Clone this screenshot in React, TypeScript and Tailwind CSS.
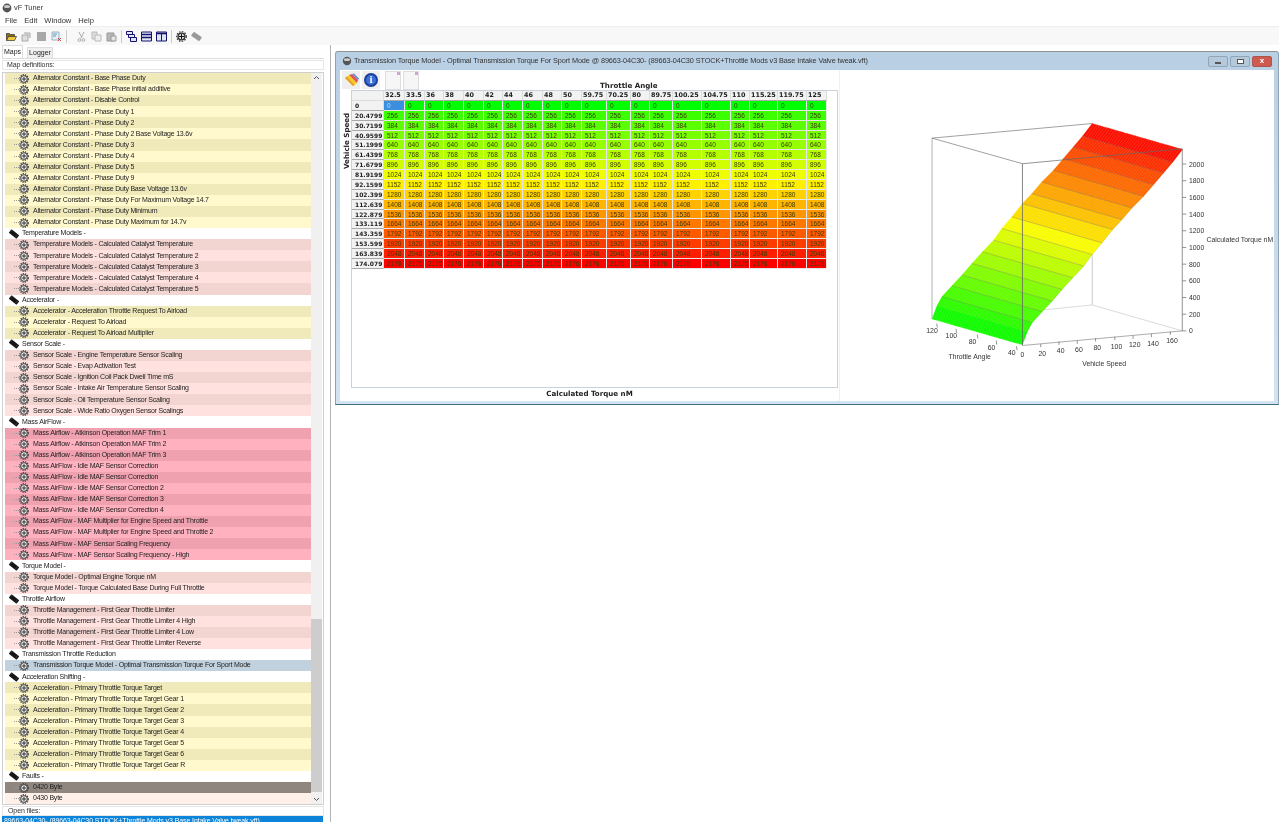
import type { ReactNode } from 'react'

const UI = "font-['Liberation_Sans',Arial,sans-serif]"

type Row = { label: string; kind: 'head' | 'yellow' | 'pink' | 'red' | 'sel' | 'dark' | 'peach' }

const group = (kind: Row['kind'], prefix: string, names: string[]): Row[] =>
  names.map((n) => ({ label: prefix + n, kind }))
const head = (label: string): Row => ({ label, kind: 'head' })

const ROWS: Row[] = [
  ...group('yellow', 'Alternator Constant - ', [
    'Base Phase Duty',
    'Base Phase initial additive',
    'Disable Control',
    'Phase Duty 1',
    'Phase Duty 2',
    'Phase Duty 2 Base Voltage 13.6v',
    'Phase Duty 3',
    'Phase Duty 4',
    'Phase Duty 5',
    'Phase Duty 9',
    'Phase Duty Base Voltage 13.6v',
    'Phase Duty For Maximum Voltage 14.7',
    'Phase Duty Minimum',
    'Phase Duty Maximum for 14.7v',
  ]),
  head('Temperature Models -'),
  ...group('pink', 'Temperature Models - Calculated Catalyst Temperature', ['', ' 2', ' 3', ' 4', ' 5']),
  head('Accelerator -'),
  ...group('yellow', 'Accelerator - ', ['Acceleration Throttle Request To Airload', 'Request To Airload', 'Request To Airload Multiplier']),
  head('Sensor Scale -'),
  ...group('pink', 'Sensor Scale - ', [
    'Engine Temperature Sensor Scaling',
    'Evap Activation Test',
    'Ignition Coil Pack Dwell Time mS',
    'Intake Air Temperature Sensor Scaling',
    'Oil Temperature Sensor Scaling',
    'Wide Ratio Oxygen Sensor Scalings',
  ]),
  head('Mass AirFlow -'),
  ...group('red', 'Mass Airflow - ', ['Atkinson Operation MAF Trim 1', 'Atkinson Operation MAF Trim 2', 'Atkinson Operation MAF Trim 3']),
  ...group('red', 'Mass AirFlow - ', [
    'Idle MAF Sensor Correction',
    'Idle MAF Sensor Correction',
    'Idle MAF Sensor Correction 2',
    'Idle MAF Sensor Correction 3',
    'Idle MAF Sensor Correction 4',
    'MAF Multiplier for Engine Speed and Throttle',
    'MAF Multiplier for Engine Speed and Throttle 2',
    'MAF Sensor Scaling Frequency',
    'MAF Sensor Scaling Frequency - High',
  ]),
  head('Torque Model -'),
  ...group('pink', 'Torque Model - ', ['Optimal Engine Torque nM', 'Torque Calculated Base During Full Throttle']),
  head('Throttle Airflow'),
  ...group('pink', 'Throttle Management - First Gear Throttle Limiter', ['', ' 4 High', ' 4 Low', ' Reverse']),
  head('Transmission Throttle Reduction'),
  { label: 'Transmission Torque Model - Optimal Transmission Torque For Sport Mode', kind: 'sel' },
  head('Acceleration Shifting -'),
  ...group('yellow', 'Acceleration - Primary Throttle Torque Target', ['', ' Gear 1', ' Gear 2', ' Gear 3', ' Gear 4', ' Gear 5', ' Gear 6', ' Gear R']),
  head('Faults -'),
  { label: '0420 Byte', kind: 'dark' },
  { label: '0430 Byte', kind: 'peach' },
]

const ROW_BG: Record<Row['kind'], [string, string]> = {
  head: ['bg-white', 'bg-white'],
  yellow: ['bg-[#f0eabb]', 'bg-[#fff9cd]'],
  pink: ['bg-[#f2d4d1]', 'bg-[#ffe2df]'],
  red: ['bg-[#f0a1b0]', 'bg-[#ffb1c0]'],
  sel: ['bg-[#c1d1de]', 'bg-[#c1d1de]'],
  dark: ['bg-[#8f8680]', 'bg-[#8f8680]'],
  peach: ['bg-[#fff0e9]', 'bg-[#fff0e9]'],
}

function GearIcon() {
  return (
    <svg width="10" height="10" viewBox="0 0 10 10" className="shrink-0">
      <circle cx="5" cy="5" r="3.2" fill="#f0f0f0" stroke="#444" strokeWidth="1.1" />
      <circle cx="5" cy="5" r="4.3" fill="none" stroke="#444" strokeWidth="1.2" strokeDasharray="1.3 1" />
      <path d="M5 3v4M3 5h4" stroke="#222" strokeWidth="0.9" />
    </svg>
  )
}

function ChipIcon() {
  return (
    <svg width="10" height="10" viewBox="0 0 10 10" className="shrink-0">
      <rect x="0" y="2.800" width="10" height="4.400" rx="0.6" fill="#151515" transform="rotate(38 5 5)" />
      <path d="M3.500 1 1.800 3M8.500 5.500 6.500 8" stroke="#444" strokeWidth="0.8" />
    </svg>
  )
}

function TreeRow({ row, alt }: { row: Row; alt: boolean }) {
  if (row.kind === 'head') {
    return (
      <div className="flex h-[11.08px] items-center bg-white pl-[4px] text-[7px] tracking-[-0.22px] text-[#222]">
        <ChipIcon />
        <span className="ml-[3px] whitespace-nowrap">{row.label}</span>
      </div>
    )
  }
  return (
    <div className={`relative flex h-[11.08px] items-center pl-[14px] text-[7px] tracking-[-0.22px] text-[#222] ${ROW_BG[row.kind][alt ? 1 : 0]}`}>
      <div className="absolute left-[9px] top-[5px] w-[5px] border-t border-dotted border-[#999]" />
      <GearIcon />
      <span className="ml-[4px] whitespace-nowrap">{row.label}</span>
    </div>
  )
}

function Tree() {
  let alt = false
  return (
    <div className="flex-1 overflow-hidden">
      {ROWS.map((r, i) => {
        if (r.kind === 'head') {
          alt = false
        } else {
          alt = !alt
        }
        return <TreeRow key={i} row={r} alt={!alt} />
      })}
    </div>
  )
}

function Tb({ children }: { children: ReactNode }) {
  return (
    <svg width="11" height="11" viewBox="0 0 11 11" className="shrink-0">
      {children}
    </svg>
  )
}

function Toolbar() {
  const sep = <div className="h-[13px] w-px bg-[#ccc]" />
  return (
    <div className="flex h-[19px] items-center gap-[4px] border-t border-[#eee] bg-[#f8f8f8] pl-[6px]">
      <Tb>
        <path d="M0.500 9.500V2.500h3l1 1h4v2" fill="#8a6a10" stroke="#333" strokeWidth="0.7" />
        <path d="M0.500 9.500 2.500 5.500h8l-2 4z" fill="#f0c83c" stroke="#333" strokeWidth="0.7" />
      </Tb>
      <Tb>
        <path d="M1 4h6v6H1zM3 2h6v5" fill="#ddd" stroke="#aaa" />
      </Tb>
      <Tb>
        <rect x="1" y="1" width="9" height="9" fill="#a8a8a8" />
      </Tb>
      <Tb>
        <path d="M1 1h7v8H1z" fill="#e4eef4" stroke="#7a9aaa" strokeWidth="0.7" />
        <path d="M2 3h4M2 5h3" stroke="#38a" strokeWidth="0.8" />
        <path d="M7 7l3 3M10 7l-3 3" stroke="#c33" strokeWidth="0.9" />
      </Tb>
      {sep}
      <div className="w-[1px]" />
      <Tb>
        <path d="M3 1l3 6M8 1 5 7" stroke="#aaa" fill="none" />
        <circle cx="3.500" cy="9" r="1.400" fill="none" stroke="#aaa" />
        <circle cx="7.500" cy="9" r="1.400" fill="none" stroke="#aaa" />
      </Tb>
      <Tb>
        <path d="M1 1h5v7H1z" fill="#ddd" stroke="#bbb" />
        <path d="M4 4h6v6H4z" fill="#eee" stroke="#bbb" />
      </Tb>
      <Tb>
        <path d="M1 2h7v8H1z" fill="#b8b8b8" stroke="#999" />
        <path d="M5 5h5v5H5z" fill="#e4e4e4" stroke="#999" />
      </Tb>
      {sep}
      <Tb>
        <path d="M0.500 0.500h6v3h-6zM2.500 3.500h6v3h-6zM4.500 6.500h6v4h-6z" fill="#dfe4f5" stroke="#14146e" strokeWidth="1" />
      </Tb>
      <Tb>
        <path d="M0.500 1h10v9h-10z" fill="#dfe4f5" stroke="#14146e" strokeWidth="1" />
        <path d="M0.500 3.500h10M0.500 6.500h10" stroke="#14146e" strokeWidth="1.400" />
      </Tb>
      <Tb>
        <path d="M0.500 1h10v9h-10z" fill="#dfe4f5" stroke="#14146e" strokeWidth="1" />
        <path d="M0.500 2.500h10" stroke="#14146e" strokeWidth="1.600" />
        <path d="M5.500 2.500V10" stroke="#14146e" strokeWidth="1" />
      </Tb>
      {sep}
      <Tb>
        <circle cx="5.500" cy="5.500" r="3.400" fill="#ddd" stroke="#333" strokeWidth="1.400" />
        <circle cx="5.500" cy="5.500" r="4.800" fill="none" stroke="#333" strokeWidth="1.200" strokeDasharray="1.500 1.300" />
        <path d="M5.500 3v5M3 5.500h5" stroke="#111" />
      </Tb>
      <Tb>
        <rect x="0.500" y="3" width="10" height="5" rx="1" fill="#999" transform="rotate(35 5.500 5.500)" />
      </Tb>
    </div>
  )
}

function Sidebar() {
  return (
    <div className="flex w-[331px] shrink-0 flex-col border-r border-[#b4b4b4] pl-[2px] pr-[6px]">
      <div className="flex h-[13px] items-end text-[7px] text-[#222]">
        <div className="flex h-[13px] w-[21px] items-center justify-center border-x border-t border-[#ddd] bg-white">Maps</div>
        <div className="ml-[4px] flex h-[11px] w-[26px] items-center justify-center border-x border-t border-[#ddd] bg-[#f0f0f0]">Logger</div>
      </div>
      <div className="flex min-h-0 flex-1 flex-col border-t border-[#ddd]">
        <div className="mt-[1px] flex h-[10px] items-center border border-[#e6e6e6] pl-[4px] text-[7px] tracking-[-0.1px] text-[#333]">Map definitions:</div>
        <div className="mt-[2px] flex h-[735px] border border-[#cfcfcf] pl-[2px] pr-[1px]">
          <Tree />
          <div className="flex w-[11px] shrink-0 flex-col bg-[#f0f0f0] text-[#555]">
            <svg width="11" height="10" viewBox="0 0 11 10" className="shrink-0">
              <path d="M3 6l2.500-2.500L8 6" fill="none" stroke="#555" strokeWidth="1" />
            </svg>
            <div className="flex-1" />
            <div className="h-[173px] bg-[#cdcdcd]" />
            <div className="h-[2px]" />
            <svg width="11" height="10" viewBox="0 0 11 10" className="shrink-0">
              <path d="M3 4l2.500 2.500L8 4" fill="none" stroke="#555" strokeWidth="1" />
            </svg>
          </div>
        </div>
        <div className="mt-[1px] flex h-[10px] items-center border border-[#e6e6e6] pl-[5px] text-[7px] tracking-[-0.1px] text-[#333]">Open files:</div>
        <div className="mr-[1px] h-[7px] overflow-hidden whitespace-nowrap bg-[#0b84d9] pl-[2px] text-[7px] tracking-[-0.1px] leading-[9px] text-white">
          89663-04C30- (89663-04C30 STOCK+Throttle Mods v3 Base Intake Valve tweak.vft)
        </div>
      </div>
    </div>
  )
}

const COLS = ['32.5', '33.5', '36', '38', '40', '42', '44', '46', '48', '50', '59.75', '70.25', '80', '89.75', '100.25', '104.75', '110', '115.25', '119.75', '125']
const SPEEDS = ['0', '20.4799', '30.7199', '40.9599', '51.1999', '61.4399', '71.6799', '81.9199', '92.1599', '102.399', '112.639', '122.879', '133.119', '143.359', '153.599', '163.839', '174.079']

const heat = (v: number) => {
  const t = Math.min(v / 2176, 1)
  const r = t < 0.5 ? Math.round(510 * t) : 255
  const g = t < 0.5 ? 255 : Math.round(255 * (2 - 2 * t))
  return `rgb(${r},${g},0)`
}

const HEAD = "font-['DejaVu_Sans',sans-serif] font-bold text-[#222]"

function MapTable() {
  return (
    <div className="grid w-[475px] grid-cols-[32px_21px_20px_19px_20px_20px_19px_20px_20px_19px_20px_25px_24px_19px_23px_29px_29px_19px_28px_29px_20px] auto-rows-[9.875px] text-[6.5px] leading-[9px]">
      <div className="border-r border-b border-[#ddd] bg-[#f2f2f2]" />
      {COLS.map((c) => (
        <div key={c} className={`overflow-hidden border-r border-b border-r-[#dcdcdc] border-b-[#a8a8a8] bg-[#f2f2f2] pl-[1px] text-[6.4px] ${HEAD}`}>
          {c}
        </div>
      ))}
      {SPEEDS.map((s, i) => {
        const v = i * 128 + (i > 0 ? 128 : 0)
        return [
          <div key={s} className={`overflow-hidden border-r border-b border-r-[#dcdcdc] border-b-[#a8a8a8] bg-[#f2f2f2] pl-[3px] text-[6px] ${HEAD}`}>
            {s}
          </div>,
          ...COLS.map((c, j) => (
            <div
              key={s + c}
              className={`overflow-hidden border-r border-b border-[#e6e6e6] pl-[3px] ${i === 0 && j === 0 ? 'text-[#cde]' : 'text-[#3a3a00]'}`}
              style={{ background: i === 0 && j === 0 ? '#3a8fe0' : heat(v) }}
            >
              {v}
            </div>
          )),
        ]
      })}
    </div>
  )
}

// chart points were read off in 3x units from x=900, y=48
const X = (p: number) => 900 + p / 3
const Y = (p: number) => 48 + p / 3
const EDGE: [number, number][] = [
  [95, 812], [110, 772], [125, 745], [155, 712], [185, 680], [215, 645], [247, 610], [280, 575], [305, 540], [335, 505],
  [367, 465], [395, 435], [425, 400], [460, 365], [490, 330], [520, 295], [548, 262], [577, 224],
]
const NCOL = 36

function Surface3D() {
  const quads: ReactNode[] = []
  for (let r = 0; r < EDGE.length - 1; r++) {
    const [ax, ay] = EDGE[r]
    const [bx, by] = EDGE[r + 1]
    const v = ((812 - (ay + by) / 2) / 588) * 2176
    for (let c = 0; c < NCOL; c++) {
      const d0 = c / NCOL
      const d1 = (c + 1) / NCOL
      const dx = 271.5
      const dy = 78
      const pts = [
        [ax + dx * d0, ay + dy * d0],
        [ax + dx * d1, ay + dy * d1],
        [bx + dx * d1, by + dy * d1],
        [bx + dx * d0, by + dy * d0],
      ]
        .map(([x, y]) => `${X(x).toFixed(1)},${Y(y).toFixed(1)}`)
        .join(' ')
      quads.push(<polygon key={`${r}-${c}`} points={pts} fill={heat(v)} stroke={heat(v)} strokeWidth="0.3" />)
      quads.push(
        <line
          key={`l${r}-${c}`}
          x1={X(ax + dx * d1)}
          y1={Y(ay + dy * d1)}
          x2={X(bx + dx * d1)}
          y2={Y(by + dy * d1)}
          stroke="#555"
          strokeOpacity="0.3"
          strokeWidth="0.5"
        />,
      )
    }
    if (r > 1) {
      quads.push(
        <line key={`b${r}`} x1={X(ax)} y1={Y(ay)} x2={X(ax + 271.5)} y2={Y(ay + 78)} stroke="#666" strokeOpacity="0.5" strokeWidth="0.6" />,
      )
    }
  }

  const line = (x1: number, y1: number, x2: number, y2: number, color = '#777', w = 0.7) => (
    <line x1={X(x1)} y1={Y(y1)} x2={X(x2)} y2={Y(y2)} stroke={color} strokeWidth={w} />
  )
  const label = (t: string, x: number, y: number, anchor: 'start' | 'middle' = 'middle') => (
    <text key={t + x} x={X(x)} y={Y(y) + 2.5} textAnchor={anchor} fontSize="6.9" fill="#333" fontFamily="Liberation Sans, sans-serif">
      {t}
    </text>
  )

  const zTicks = [0, 200, 400, 600, 800, 1000, 1200, 1400, 1600, 1800, 2000]
  const sTicks: [string, number, number][] = [
    ['20', 427, 915], ['40', 482, 908], ['60', 537, 905], ['80', 592, 898], ['100', 650, 894],
    ['120', 705, 890], ['140', 760, 885], ['160', 817, 878],
  ]
  const tTicks: [string, number, number][] = [['120', 95, 846], ['100', 153, 862], ['80', 217, 879], ['60', 274, 897], ['40', 335, 914]]

  return (
    <svg viewBox="840 69 434 332" className="block h-full w-full">
      {line(95, 268, 95, 812, '#a8a8a8', 0.9)}
      {line(577, 224, 577, 770, '#c4c4c4', 0.9)}
      {line(577, 770, 848, 848, '#d2d2d2', 0.8)}
      {line(577, 770, 430, 785, '#d2d2d2', 0.8)}
      {line(95, 268, 577, 224)}
      {quads}
      {line(95, 268, 367, 345)}
      {line(367, 345, 848, 300, '#666')}
      {line(367, 345, 367, 892, '#666', 0.8)}
      {line(848, 300, 848, 848, '#777', 0.8)}
      {line(367, 892, 848, 848, '#888')}
      {zTicks.map((z, i) => {
        const py = 848 - (i * 502) / 10
        return (
          <g key={z}>
            {line(848, py, 860, py, '#666')}
            {label(String(z), 868, py, 'start')}
          </g>
        )
      })}
      {label('0', 367, 920)}
      {sTicks.map(([t, x, y]) => (
        <g key={t}>
          {line(x - 5, y - 28, x - 5, y - 18, '#666')}
          {label(t, x, y)}
        </g>
      ))}
      {tTicks.map(([t, x, y]) => (
        <g key={t}>
          {line(x + 14, y - 20, x + 16, y - 8, '#666')}
          {label(t, x, y)}
        </g>
      ))}
      {label('Throttle Angle', 208, 925)}
      {label('Vehicle Speed', 613, 945)}
      {label('Calculated Torque nM', 921, 572, 'start')}
    </svg>
  )
}

function MapWindow() {
  return (
    <div className="flex h-[354px] w-[944px] flex-col rounded-t-[3px] border border-t-[#8e9398] border-x-[#8fa3b3] border-b-[#3f6f80] bg-gradient-to-b from-[#b9cfe4] to-[#d3e3f2] px-[4px] pb-[3px]">
      <div className="flex h-[18px] shrink-0 items-center pl-[2px]">
        <svg width="10" height="10" viewBox="0 0 11 11" className="shrink-0">
          <circle cx="5.500" cy="5.500" r="4.600" fill="#555" />
          <ellipse cx="5.500" cy="4" rx="3.400" ry="1.600" fill="#ccc" />
        </svg>
        <span className="ml-[2px] whitespace-nowrap text-[7.3px] tracking-[-0.1px] text-[#333]">
          Transmission Torque Model - Optimal Transmission Torque For Sport Mode @ 89663-04C30- (89663-04C30 STOCK+Throttle Mods v3 Base Intake Valve tweak.vft)
        </span>
        <div className="ml-auto flex items-center gap-[2px] pr-[2px]">
          <div className="flex h-[11px] w-[20px] items-center justify-center rounded-[2px] border border-[#8fa6ba] bg-[#b6c9da]">
            <div className="mt-[3px] h-[2px] w-[6px] border border-[#555] bg-white" />
          </div>
          <div className="flex h-[11px] w-[20px] items-center justify-center rounded-[2px] border border-[#8fa6ba] bg-[#b6c9da]">
            <div className="h-[5px] w-[7px] border border-[#555] bg-white" />
          </div>
          <div className="flex h-[11px] w-[20px] items-center justify-center rounded-[2px] border border-[#a8564c] bg-[#cf5a4e] text-[8px] font-bold leading-none text-white">
            x
          </div>
        </div>
      </div>
      <div className="flex min-h-0 flex-1 bg-white">
        <div className="flex w-[499px] shrink-0 flex-col">
          <div className="relative flex h-[20px] shrink-0 items-center gap-[2px] pl-[2px]">
            <div className="flex h-[18px] w-[18px] items-center justify-center bg-[#efefef]">
              <svg width="15" height="15" viewBox="0 0 15 15">
                <path d="M1 5 5 2l8 8-4 3z" fill="#f4d020" />
                <path d="M5 2l3-1 6 6-1 3z" fill="#dd5555" />
                <path d="M3 3.500 1 5l8 8 1.500-1z" fill="#e8a030" />
                <path d="M8 1l2-.5 5 5-1 1.500z" fill="#6a8ad8" />
              </svg>
            </div>
            <div className="flex h-[18px] w-[18px] items-center justify-center bg-[#efefef]">
              <div className="flex h-[14px] w-[14px] items-center justify-center rounded-full border-2 border-[#1a3f9c] bg-[#3b6fd8] font-serif text-[10px] font-bold leading-none text-white">
                i
              </div>
            </div>
            <div className="ml-[3px] flex h-[19px] w-[16px] justify-end border border-[#ddd] bg-[#f6f6f6]">
              <div className="h-[3px] w-[3px] bg-[#c9a8c9]" />
            </div>
            <div className="flex h-[19px] w-[16px] justify-end border border-[#ddd] bg-[#f6f6f6]">
              <div className="h-[3px] w-[3px] bg-[#c9a8c9]" />
            </div>
            <div className={`absolute left-[260px] top-[10px] text-[7.1px] leading-[11px] ${HEAD}`}>Throttle Angle</div>
          </div>
          <div className="flex min-h-0 flex-1 pl-[2px]">
            <div className="flex w-[9px] shrink-0 justify-center pt-[24px]">
              <div className={`h-[55px] whitespace-nowrap text-[7.1px] leading-[9px] [writing-mode:vertical-rl] rotate-180 ${HEAD}`}>Vehicle Speed</div>
            </div>
            <div className="h-[298px] w-[487px] shrink-0 border border-[#c9d2da]">
              <MapTable />
            </div>
          </div>
          <div className={`flex h-[14px] shrink-0 items-center justify-center text-[7.1px] ${HEAD}`}>Calculated Torque nM</div>
        </div>
        <div className="min-w-0 flex-1 border-l border-[#f0f0f0]">
          <Surface3D />
        </div>
      </div>
    </div>
  )
}

export default function App() {
  return (
    <div className={`flex h-[822px] w-[1279px] flex-col overflow-hidden bg-white blur-[0.3px] ${UI}`}>
      <div className="flex h-[15px] shrink-0 items-center pl-[2px] text-[7.4px] text-[#333]">
        <svg width="10" height="10" viewBox="0 0 10 10">
          <circle cx="5" cy="5" r="4.400" fill="#555" />
          <ellipse cx="5" cy="3.600" rx="3" ry="1.500" fill="#ccc" />
        </svg>
        <span className="ml-[2px]">vF Tuner</span>
      </div>
      <div className="flex h-[11px] shrink-0 items-center gap-[7px] pl-[5px] text-[7.6px] text-[#333]">
        <span>File</span>
        <span>Edit</span>
        <span>Window</span>
        <span>Help</span>
      </div>
      <Toolbar />
      <div className="flex min-h-0 flex-1">
        <Sidebar />
        <div className="pl-[4px] pt-[6px]">
          <MapWindow />
        </div>
      </div>
    </div>
  )
}
